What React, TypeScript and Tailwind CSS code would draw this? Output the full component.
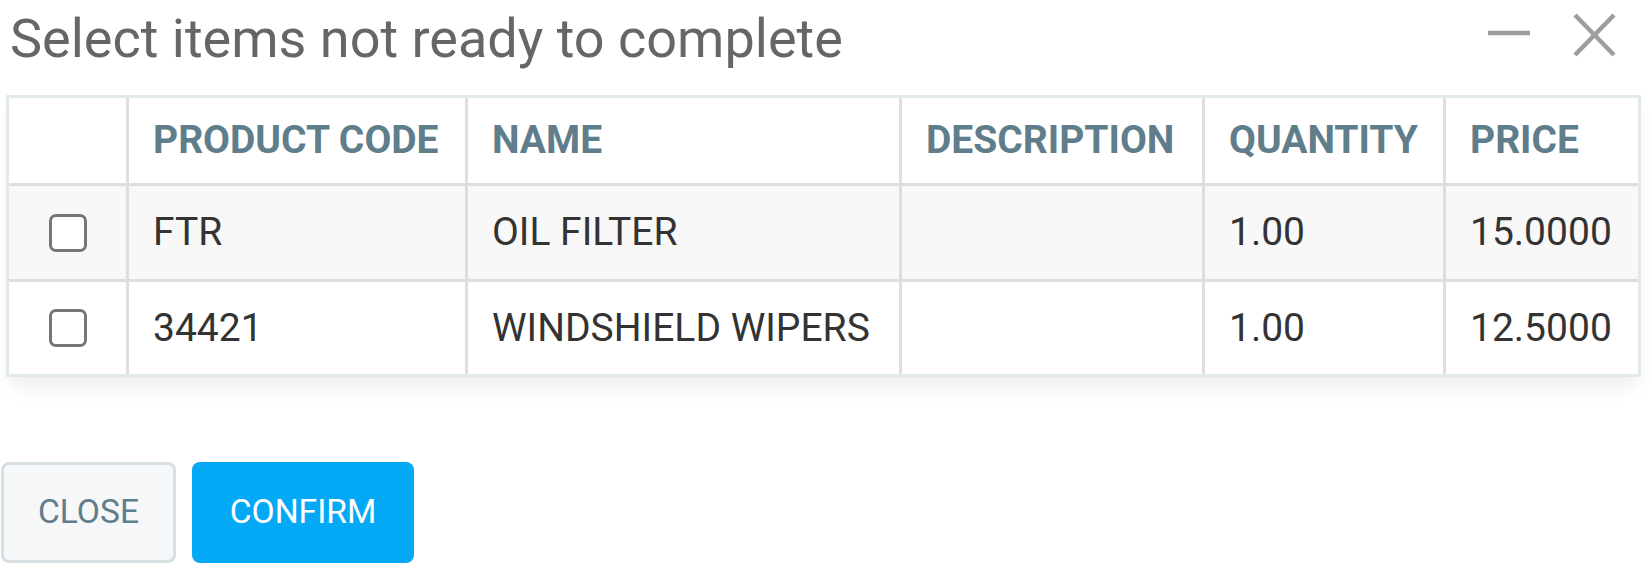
import React from "react";

const headers = ["PRODUCT CODE", "NAME", "DESCRIPTION", "QUANTITY", "PRICE"];
const rows = [
  { code: "FTR", name: "OIL FILTER", desc: "", qty: "1.00", price: "15.0000" },
  { code: "34421", name: "WINDSHIELD WIPERS", desc: "", qty: "1.00", price: "12.5000" },
];

const colW = ["w-[120px]", "w-[339px]", "w-[434px]", "w-[303px]", "w-[241px]", "w-[192px]"];

function Checkbox() {
  return <div className="w-[38px] h-[38px] rounded-[7px] border-[3px] border-[#767676] bg-white" />;
}

export default function App() {
  return (
    <div
      className="w-[1650px] h-[565px] bg-white overflow-hidden"
      style={{ fontFamily: "Roboto, 'Liberation Sans', sans-serif" }}
    >
      {/* Title bar */}
      <div className="flex items-start justify-between h-[95px] pl-[10px] pr-[34px]">
        <h1 className="mt-[12px] text-[54px] leading-none font-normal text-[#666666]">
          Select items not ready to complete
        </h1>
        <div className="flex items-start gap-[41px] mt-[8px]">
          <svg width="44" height="50" viewBox="0 0 44 50">
            <line x1="1" y1="25" x2="43" y2="25" stroke="#9e9e9e" strokeWidth="4.5" />
          </svg>
          <svg width="44" height="50" viewBox="0 0 44 50">
            <line x1="3" y1="7" x2="42" y2="47" stroke="#9e9e9e" strokeWidth="4.5" />
            <line x1="42" y1="7" x2="3" y2="47" stroke="#9e9e9e" strokeWidth="4.5" />
          </svg>
        </div>
      </div>

      {/* Table */}
      <div className="ml-[6px] w-[1635px] border-[3px] border-[#e2e9ed] shadow-[0_14px_18px_-4px_rgba(0,0,0,0.07)] text-[39px] leading-none">
        <div className="flex h-[88px] bg-white border-b-[3px] border-[#dedede]">
          <div className={`${colW[0]} shrink-0 border-r-[3px] border-[#dedede]`} />
          {headers.map((h, i) => (
            <div
              key={h}
              className={`${colW[i + 1]} shrink-0 flex items-center pl-[24px] font-bold text-[#607d8b] ${
                i < headers.length - 1 ? "border-r-[3px] border-[#dedede]" : ""
              }`}
            >
              {h}
            </div>
          ))}
        </div>
        {rows.map((r, ri) => {
          const cells = [r.code, r.name, r.desc, r.qty, r.price];
          return (
            <div
              key={ri}
              className={`flex ${ri === 0 ? "h-[96px] bg-[#f8f8f8] border-b-[3px] border-[#dedede]" : "h-[92px] bg-white"}`}
            >
              <div className={`${colW[0]} shrink-0 flex items-center justify-center border-r-[3px] border-[#dedede]`}>
                <Checkbox />
              </div>
              {cells.map((c, i) => (
                <div
                  key={i}
                  className={`${colW[i + 1]} shrink-0 flex items-center pl-[24px] text-[#333333] ${
                    i < cells.length - 1 ? "border-r-[3px] border-[#dedede]" : ""
                  }`}
                >
                  {c}
                </div>
              ))}
            </div>
          );
        })}
      </div>

      {/* Buttons */}
      <div className="flex gap-[16px] mt-[85px] ml-[1px]">
        <button className="w-[175px] h-[101px] rounded-[8px] border-[3px] border-[#d8dfe3] bg-[#f5f7f9] text-[33.6px] text-[#607d8b] flex items-center justify-center">
          CLOSE
        </button>
        <button className="w-[222px] h-[101px] rounded-[8px] bg-[#03a9f4] text-[33.6px] text-white flex items-center justify-center">
          CONFIRM
        </button>
      </div>
    </div>
  );
}
